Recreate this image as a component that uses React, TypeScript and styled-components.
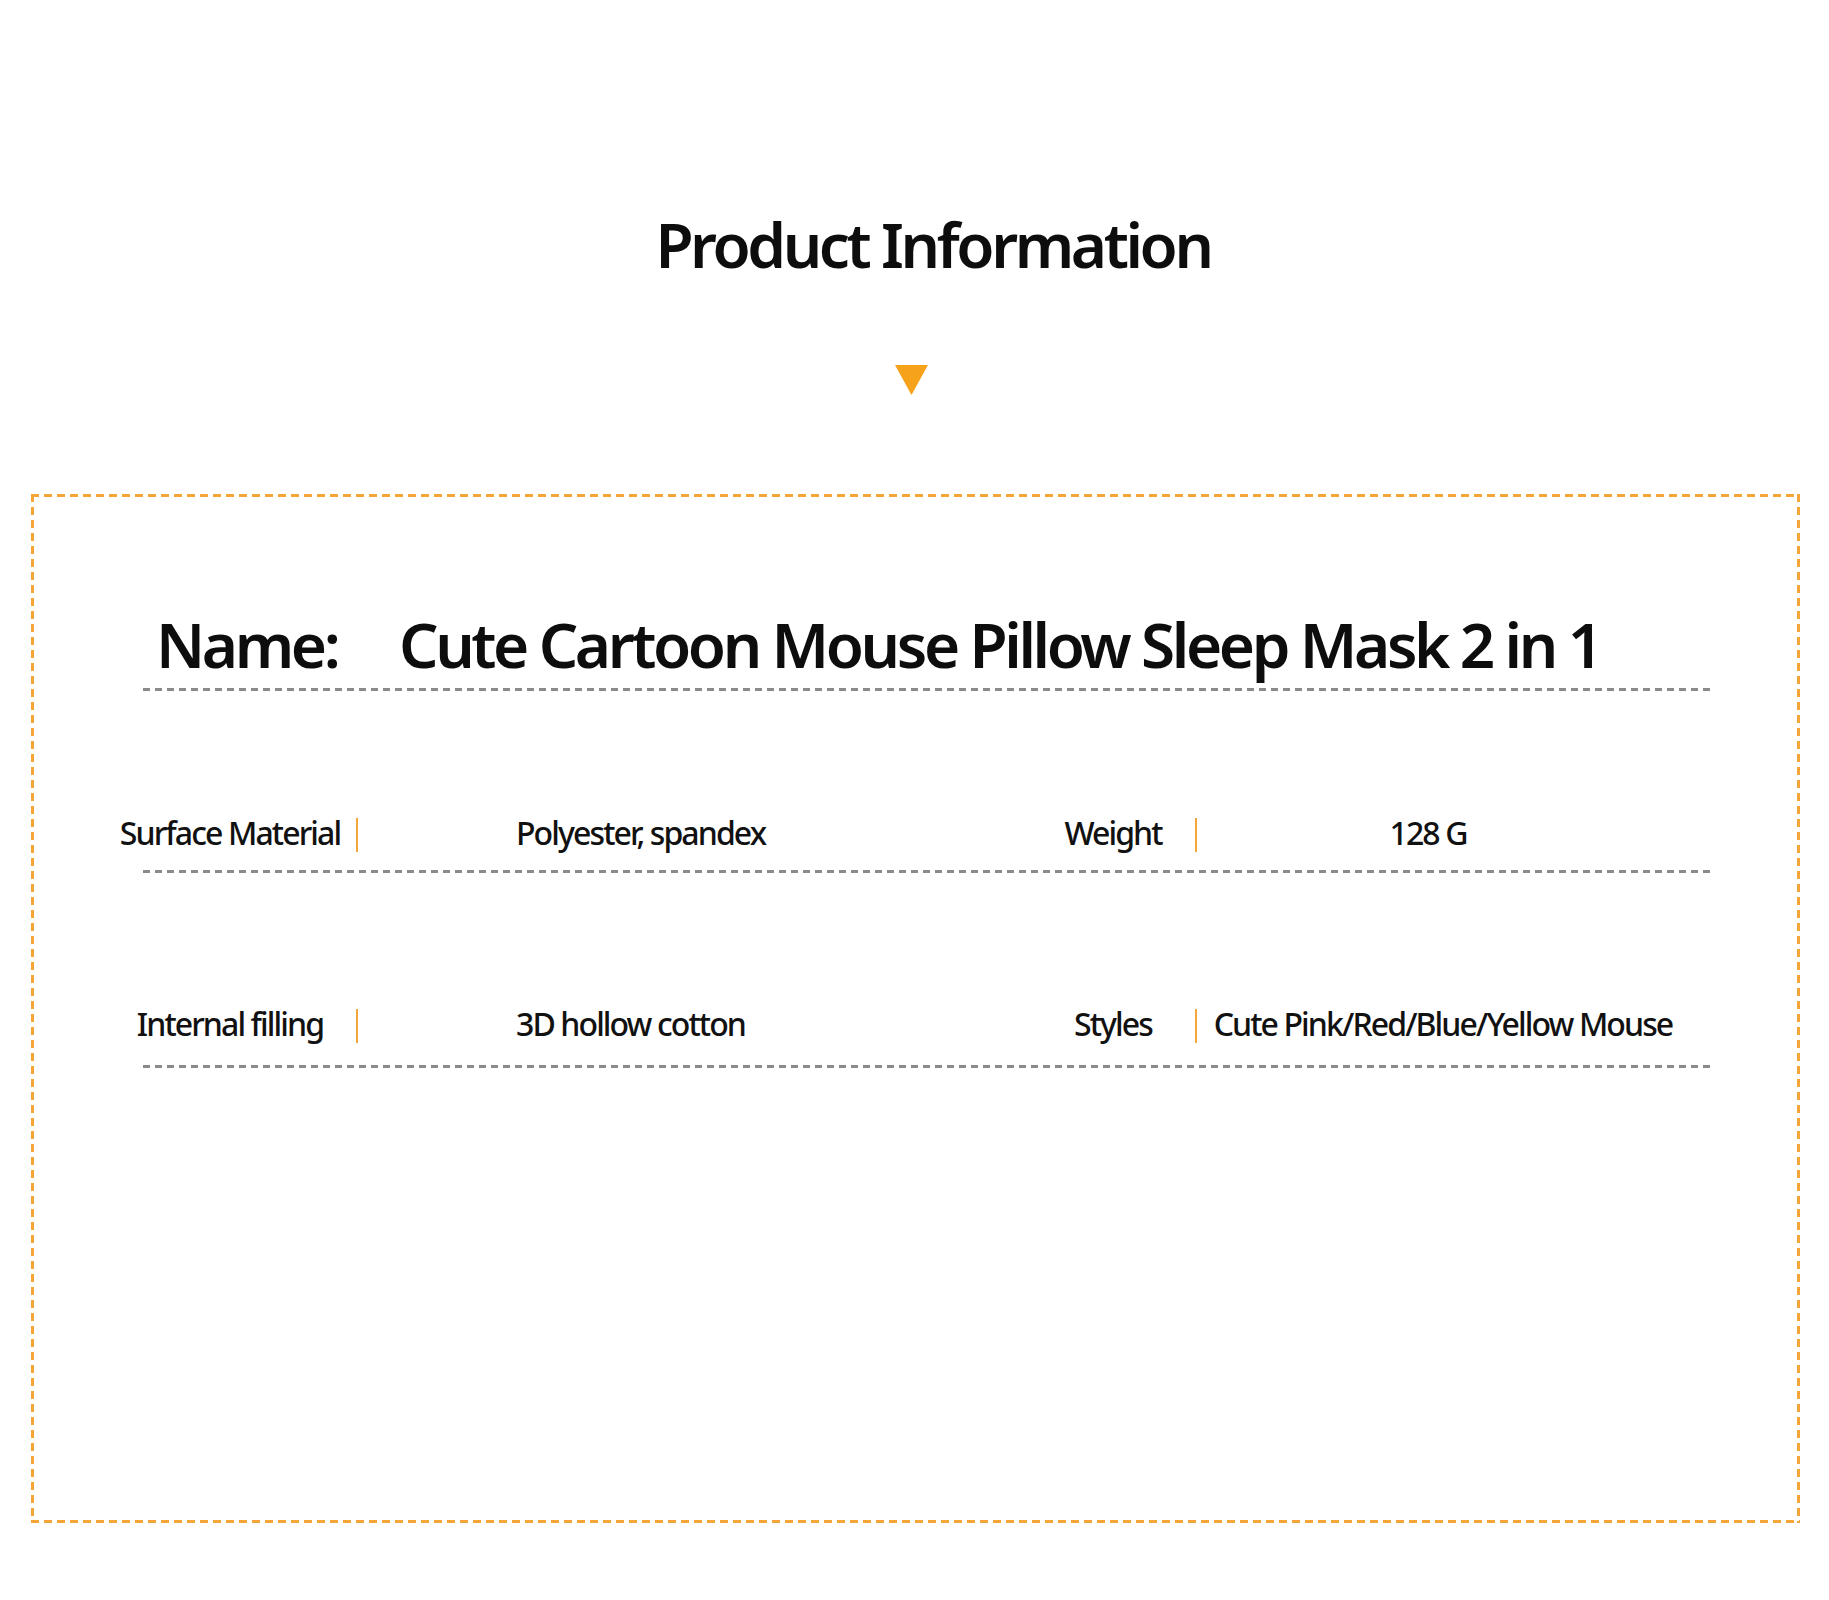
import React from "react";
import styled, { createGlobalStyle } from "styled-components";

const ORANGE = "#f5a638";

const GlobalStyle = createGlobalStyle`
  html, body {
    margin: 0;
    padding: 0;
    background: #ffffff;
  }
  body {
    font-family: "Noto Sans", "Open Sans", sans-serif;
    color: #111111;
  }
`;

type Spec = { label: string; value: string; nudge?: number };

const rows: [Spec, Spec][] = [
  [
    { label: "Surface Material", value: "Polyester, spandex" },
    { label: "Weight", value: "128 G", nudge: 30 },
  ],
  [
    { label: "Internal filling", value: "3D hollow cotton" },
    { label: "Styles", value: "Cute Pink/Red/Blue/Yellow Mouse" },
  ],
];

const App = () => {
  return (
    <Page>
      <GlobalStyle />
      <Header>
        <Title>Product Information</Title>
        <Pointer width="33" height="30" viewBox="0 0 33 30">
          <polygon points="0,0 33,0 16.5,30" fill="#f7a21b" />
        </Pointer>
      </Header>

      <Frame>
        <Sheet>
          <NameRow>
            <NameLabel>Name:</NameLabel>
            <NameValue>Cute Cartoon Mouse Pillow Sleep Mask 2 in 1</NameValue>
          </NameRow>
          <Divider />

          {rows.map(([left, right], index) => (
            <React.Fragment key={index}>
              <InfoRow $gap={index === 0 ? 122 : 131}>
                <Label>{left.label}</Label>
                <Bar />
                <LeftValue>{left.value}</LeftValue>
                <Label>{right.label}</Label>
                <Bar />
                <RightValue $nudge={right.nudge ?? 0}>{right.value}</RightValue>
              </InfoRow>
              <Divider $gap={index === 0 ? 17 : 21} />
            </React.Fragment>
          ))}
        </Sheet>
      </Frame>
    </Page>
  );
};

export default App;

const Page = styled.div`
  width: 1829px;
  min-height: 1600px;
  padding-top: 204px;
  box-sizing: border-box;
`;

const Header = styled.header`
  display: flex;
  flex-direction: column;
  align-items: center;
`;

const Title = styled.h1`
  margin: 0;
  padding-left: 37px;
  font-size: 62px;
  line-height: 80px;
  font-weight: 600;
  letter-spacing: -3.4px;
  color: #0d0d0d;
  white-space: nowrap;
`;

const Pointer = styled.svg`
  display: block;
  margin-top: 81px;
  margin-right: 6px;
`;

const Frame = styled.section`
  margin: 99px 0 0 31px;
  width: 1769px;
  height: 1029px;
  box-sizing: border-box;
  padding: 3px;
  background:
    repeating-linear-gradient(to right, ${ORANGE} 0 8px, transparent 8px 13px) top left / 100% 3px no-repeat,
    repeating-linear-gradient(to right, ${ORANGE} 0 8px, transparent 8px 13px) bottom left / 100% 3px no-repeat,
    repeating-linear-gradient(to bottom, ${ORANGE} 0 8px, transparent 8px 13px) top left / 3px 100% no-repeat,
    repeating-linear-gradient(to bottom, ${ORANGE} 0 8px, transparent 8px 13px) top right / 3px 100% no-repeat;
`;

const Sheet = styled.div`
  margin-left: 109px;
  width: 1567px;
  padding-top: 107px;
`;

const NameRow = styled.div`
  display: flex;
  align-items: baseline;
  padding-left: 13px;
  height: 80px;
  font-size: 62px;
  line-height: 80px;
  font-weight: 600;
  letter-spacing: -3.4px;
  color: #0d0d0d;
  white-space: nowrap;
`;

const NameLabel = styled.span`
  width: 243px;
  flex-shrink: 0;
`;

const NameValue = styled.span``;

const Divider = styled.div<{ $gap?: number }>`
  height: 3px;
  margin-top: ${(p) => p.$gap ?? 4}px;
  background: repeating-linear-gradient(to right, #8a8a8a 0 7px, transparent 7px 12px);
`;

const InfoRow = styled.div<{ $gap: number }>`
  display: grid;
  grid-template-columns: 240px 14px 676px 146px 19px 476px;
  align-items: start;
  height: 40px;
  margin: ${(p) => p.$gap}px 0 0 -33px;
  font-size: 32px;
  line-height: 40px;
  font-weight: 500;
  letter-spacing: -1.9px;
  color: #111111;
  white-space: nowrap;
`;

const Label = styled.div`
  display: flex;
  justify-content: center;
`;

const Bar = styled.div`
  justify-self: center;
  width: 2px;
  height: 34px;
  margin-top: 5px;
  background: ${ORANGE};
`;

const LeftValue = styled.div`
  padding-left: 152px;
`;

const RightValue = styled.div<{ $nudge: number }>`
  display: flex;
  justify-content: center;
  padding-right: ${(p) => p.$nudge}px;
`;
